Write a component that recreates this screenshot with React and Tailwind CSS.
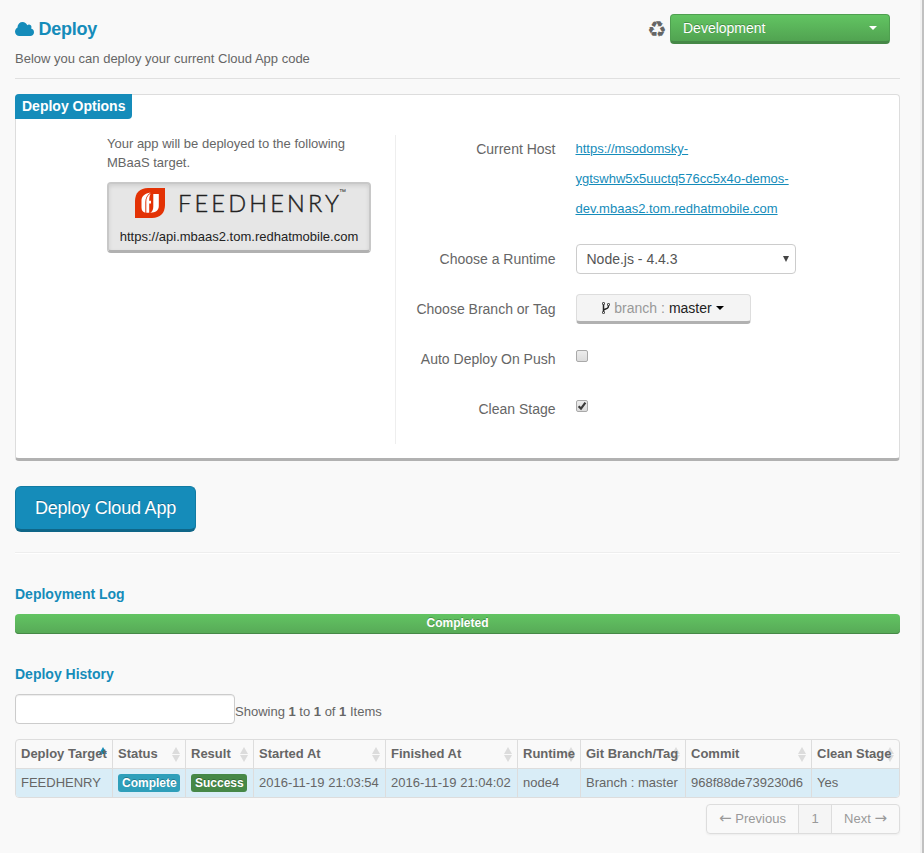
import React from "react";

function CloudIcon() {
  return (
    <svg viewBox="64 128 1920 1408" className="h-[14px] w-[19px]" fill="#158cba" preserveAspectRatio="none">
      <path d="M1984 1152q0 159-112.500 271.500t-271.500 112.500h-1088q-185 0-316.500-131.500t-131.500-316.500q0-132 71-241.500t187-163.500q-2-28-2-43 0-212 150-362t362-150q158 0 286.500 88t187.500 230q70-62 166-62 106 0 181 75t75 181q0 75-41 138 129 30 213 134.500t84 239.500z" />
    </svg>
  );
}

function ForkIcon() {
  return (
    <svg viewBox="384 128 1024 1536" className="h-[12px] w-[8px]" fill="#222">
      <path d="M672 1472q0-40-28-68t-68-28-68 28-28 68 28 68 68 28 68-28 28-68zm0-1152q0-40-28-68t-68-28-68 28-28 68 28 68 68 28 68-28 28-68zm640 128q0-40-28-68t-68-28-68 28-28 68 28 68 68 28 68-28 28-68zm96 0q0 52-26 96.5t-70 69.5q-2 287-226 414-67 38-203 81-128 40-169.5 71t-41.5 100v26q44 25 70 69.5t26 96.5q0 80-56 136t-136 56-136-56-56-136q0-52 26-96.5t70-69.5v-820q-44-25-70-69.5t-26-96.5q0-80 56-136t136-56 136 56 56 136q0 52-26 96.5t-70 69.5v497q54-26 154-57 55-17 87.5-29.5t70.5-31 59-39.5 40.5-51 28-69.5 8.5-91.5q-44-25-70-69.5t-26-96.5q0-80 56-136t136-56 136 56 56 136z" />
    </svg>
  );
}

function Caret({ className = "" }) {
  return (
    <svg viewBox="0 0 8 4" className={`h-[4px] w-[8px] ${className}`} fill="currentColor">
      <path d="M0 0h8L4 4z" />
    </svg>
  );
}

function FeedHenryMark() {
  return (
    <svg viewBox="0 0 30 30" className="h-[30px] w-[30px] shrink-0">
      <path d="M13 0H30V17C30 25 25 30 17 30H0V13C0 5 5 0 13 0Z" fill="#e33205" />
      <path d="M15.500 4.500C10 5.500 6.500 8 6.500 12.500V19.500C6.500 22.500 7.800 24.200 10.300 24.700V14C10.300 10 12 7 15.500 4.500Z" fill="#fff" />
      <path d="M15.800 5.500C12.500 7.500 11.300 10 11.300 13.500V24.800H14.200V15.500H16V12.800H14.200C14.200 10 14.500 7.500 15.800 5.500Z" fill="#fff" />
      <path d="M18.300 6H23.800V18C23.800 22.300 20.800 24.600 15.200 24.800C17.500 23.500 18.300 21.500 18.300 18.500Z" fill="#fff" />
    </svg>
  );
}

function FormRow({ label, children }) {
  return (
    <div className="flex h-[30px]">
      <div className="w-[159.5px] text-right text-[14px] leading-[30px]">{label}</div>
      <div className="ml-[20.5px]">{children}</div>
    </div>
  );
}

function CheckBox({ checked }) {
  return (
    <div className="mt-[6px] h-3 w-3 rounded-[2px] border border-[#a9a9a9] bg-linear-to-b from-[#ededed] to-[#dcdcdc]">
      {checked && (
        <svg viewBox="0 0 10 10" className="h-[10px] w-[10px]" fill="none" stroke="#3b3b3b" strokeWidth="2.2">
          <path d="M1.600 5.200L4 7.600L8.400 1.700" />
        </svg>
      )}
    </div>
  );
}

function SortArrows({ active }) {
  if (active) {
    return (
      <svg viewBox="0 0 8 15" className="h-[15px] w-2" fill="#158cba">
        <path d="M4 0L8 7H0z" />
      </svg>
    );
  }
  return (
    <svg viewBox="0 0 8 15" className="h-[15px] w-2" fill="#dcdcdc">
      <path d="M4 0L8 7H0zM0 8H8L4 15z" />
    </svg>
  );
}

const columns = [
  "Deploy Target",
  "Status",
  "Result",
  "Started At",
  "Finished At",
  "Runtime",
  "Git Branch/Tag",
  "Commit",
  "Clean Stage",
];

const badge = "block h-[18px] rounded-[3px] px-1 text-[12px] leading-[18px] font-bold text-white [text-shadow:0_-1px_0_rgba(0,0,0,.25)]";

const row = [
  "FEEDHENRY",
  <span className={`${badge} w-[62px] bg-[#2f9fba]`}>Complete</span>,
  <span className={`${badge} w-[56px] bg-[#468847]`}>Success</span>,
  "2016-11-19 21:03:54",
  "2016-11-19 21:04:02",
  "node4",
  "Branch : master",
  "968f88de739230d6",
  "Yes",
];

const tableGrid = "grid grid-cols-[96px_73px_68px_132px_132px_63px_105px_126px_88px]";

export default function App() {
  return (
    <div className="flex h-[853px] w-[924px] overflow-hidden bg-[#f9f9f9] font-['Liberation_Sans',Arial,sans-serif] text-[13px] text-[#666]">
      <main className="flex w-[920px] shrink-0 flex-col pr-5 pl-[15px]">
        <header className="flex h-[79px] justify-between border-b border-[#e0e0e0]">
          <div>
            <h1 className="mt-[19px] flex h-5 items-center gap-[4.5px] text-[18px] leading-5 font-bold tracking-[-0.25px] text-[#158cba]">
              <CloudIcon />
              Deploy
            </h1>
            <p className="mt-[11px] leading-[18px]">Below you can deploy your current Cloud App code</p>
          </div>
          <div className="mt-[14px] mr-[10px] flex h-[30px] items-center gap-[3px]">
            <span className="mt-px font-['DejaVu_Sans',sans-serif] text-[22px] leading-[22px] text-[#666]">♻</span>
            <button className="flex h-[30px] w-[220px] items-center justify-between rounded-[4px] border border-b-[3px] border-[#4fa050] border-b-[#468847] bg-linear-to-b from-[#62c462] to-[#51a351] px-3 text-[14px] text-white [text-shadow:0_-1px_0_rgba(0,0,0,.25)]">
              Development
              <Caret />
            </button>
          </div>
        </header>

        <section className="mt-[15px] h-[367px] shrink-0 rounded-[4px] border border-b-[3px] border-[#ddd] border-b-[#b1b1b1] bg-white">
          <h2 className="-mt-px -ml-px h-[25px] w-[117px] rounded-tl-[4px] rounded-br-[4px] bg-[#158cba] pl-[7px] text-[14px] leading-6 font-bold whitespace-nowrap text-white">
            Deploy Options
          </h2>
          <div className="flex">
            <div className="mt-[16px] h-[309px] w-[380px] border-r border-[#eee] pl-[91px]">
              <p className="-mt-px leading-[19px]">
                Your app will be deployed to the following
                <br />
                MBaaS target.
              </p>
              <div className="mt-[10px] flex h-[71px] w-[264px] flex-col rounded-[4px] border-2 border-b-[3px] border-[#c8c8c8] border-b-[#b1b1b1] bg-[#e6e6e6] shadow-[inset_0_2px_4px_rgba(0,0,0,.1)]">
                <div className="mt-[4px] ml-[26px] flex h-[30px]">
                  <FeedHenryMark />
                  <span className="ml-[13px] w-[161px] font-['Lato'] text-[23.5px] leading-[30px] font-light tracking-[3.2px] whitespace-nowrap text-[#222] [-webkit-text-stroke:0.4px_#222]">FEEDHENRY</span>
                  <span className="text-[7px] leading-[8px] text-[#222]">™</span>
                </div>
                <p className="mt-[10px] text-center leading-[18px] text-[#222]">https://api.mbaas2.tom.redhatmobile.com</p>
              </div>
            </div>
            <div className="mt-[15px] flex flex-col gap-5">
              <div className="flex h-[90px]">
                <div className="w-[159.5px] text-right text-[14px] leading-[30px]">Current Host</div>
                <a className="ml-5 leading-[30px] text-[#158cba] underline">
                  https://msodomsky-
                  <br />
                  ygtswhw5x5uuctq576cc5x4o-demos-
                  <br />
                  dev.mbaas2.tom.redhatmobile.com
                </a>
              </div>
              <FormRow label="Choose a Runtime">
                <div className="flex h-[30px] w-[220px] items-center justify-between rounded-[4px] border border-[#ccc] bg-white pr-[6px] pl-[9.5px] text-[14px] text-[#555]">
                  Node.js - 4.4.3
                  <svg viewBox="0 0 6 6" className="h-[6px] w-[6px]" fill="#444">
                    <path d="M0 0h6L3 6z" />
                  </svg>
                </div>
              </FormRow>
              <FormRow label="Choose Branch or Tag">
                <button className="flex h-[30px] w-[175px] items-center justify-center rounded-[4px] border border-b-[3px] border-[#ddd] border-b-[#b1b1b1] bg-[#f4f4f4] pr-px text-[14px] text-[#222]">
                  <ForkIcon />
                  <span className="ml-1 text-[#999]">branch :</span>
                  <span className="ml-1">master</span>
                  <Caret className="ml-1 text-black" />
                </button>
              </FormRow>
              <FormRow label="Auto Deploy On Push">
                <CheckBox />
              </FormRow>
              <FormRow label="Clean Stage">
                <CheckBox checked />
              </FormRow>
            </div>
          </div>
        </section>

        <button className="mt-[25px] h-[46px] w-[181px] shrink-0 rounded-[6px] border border-b-[3px] border-[#127ba3] border-b-[#0f6688] bg-[#158cba] text-[18px] tracking-[-0.18px] whitespace-nowrap text-white [text-shadow:0_-1px_0_rgba(0,0,0,.25)]">
          Deploy Cloud App
        </button>
        <hr className="mt-[20px] h-[2px] border-t border-b border-t-[#eee] border-b-white" />

        <h3 className="mt-[30px] text-[14px] leading-5 font-bold text-[#158cba]">Deployment Log</h3>
        <div className="mt-[10px] h-5 shrink-0 rounded-[4px] bg-linear-to-b from-[#62c462] to-[#57a957] text-center text-[12px] leading-[19px] font-bold text-white shadow-[inset_0_-1px_0_#468847] [text-shadow:0_-1px_0_rgba(0,0,0,.25)]">
          Completed
        </div>

        <h3 className="mt-[30px] text-[14px] leading-5 font-bold text-[#158cba]">Deploy History</h3>
        <div className="mt-[10px] flex h-[30px] shrink-0">
          <input className="h-[30px] w-[220px] rounded-[4px] border border-[#ccc] bg-white shadow-[inset_0_1px_1px_rgba(0,0,0,.075)]" />
          <p className="mt-[8px] leading-[19px]">
            Showing <b>1</b> to <b>1</b> of <b>1</b> Items
          </p>
        </div>

        <div className="mt-[15px] h-[59px] shrink-0 overflow-hidden rounded-[4px] border border-[#ddd]">
          <div className={`${tableGrid} h-7`}>
            {columns.map((name, i) => (
              <div key={name} className={`relative pl-[5px] leading-[27px] font-bold whitespace-nowrap ${i ? "border-l border-[#ddd]" : ""}`}>
                <span className="absolute top-[7px] right-[5.5px] flex">
                  <SortArrows active={i === 0} />
                </span>
                <span className="relative">{name}</span>
              </div>
            ))}
          </div>
          <div className={`${tableGrid} h-[29px] border-t border-[#ddd] bg-[#d9edf7]`}>
            {row.map((value, i) => (
              <div key={i} className={`flex items-center pl-[5px] whitespace-nowrap ${i ? "border-l border-[#ddd]" : ""}`}>
                {value}
              </div>
            ))}
          </div>
        </div>

        <nav className="mt-[6px] flex h-[30px] w-[194px] shrink-0 self-end rounded-[4px] border border-[#ddd] text-center leading-[27px] text-[#999] shadow-[0_1px_2px_rgba(0,0,0,.05)]">
          <span className="w-[91px]">
            <span className="font-['DejaVu_Sans'] text-[15px] leading-none">←</span> Previous
          </span>
          <span className="w-[34px] border-r border-l border-[#ddd] bg-[#f5f5f5]">1</span>
          <span className="w-[67px]">
            Next <span className="font-['DejaVu_Sans'] text-[15px] leading-none">→</span>
          </span>
        </nav>
      </main>
      <div className="w-[2px] bg-[#f1f1f1]" />
      <div className="w-[2px] bg-[#c1c1c1]" />
    </div>
  );
}
